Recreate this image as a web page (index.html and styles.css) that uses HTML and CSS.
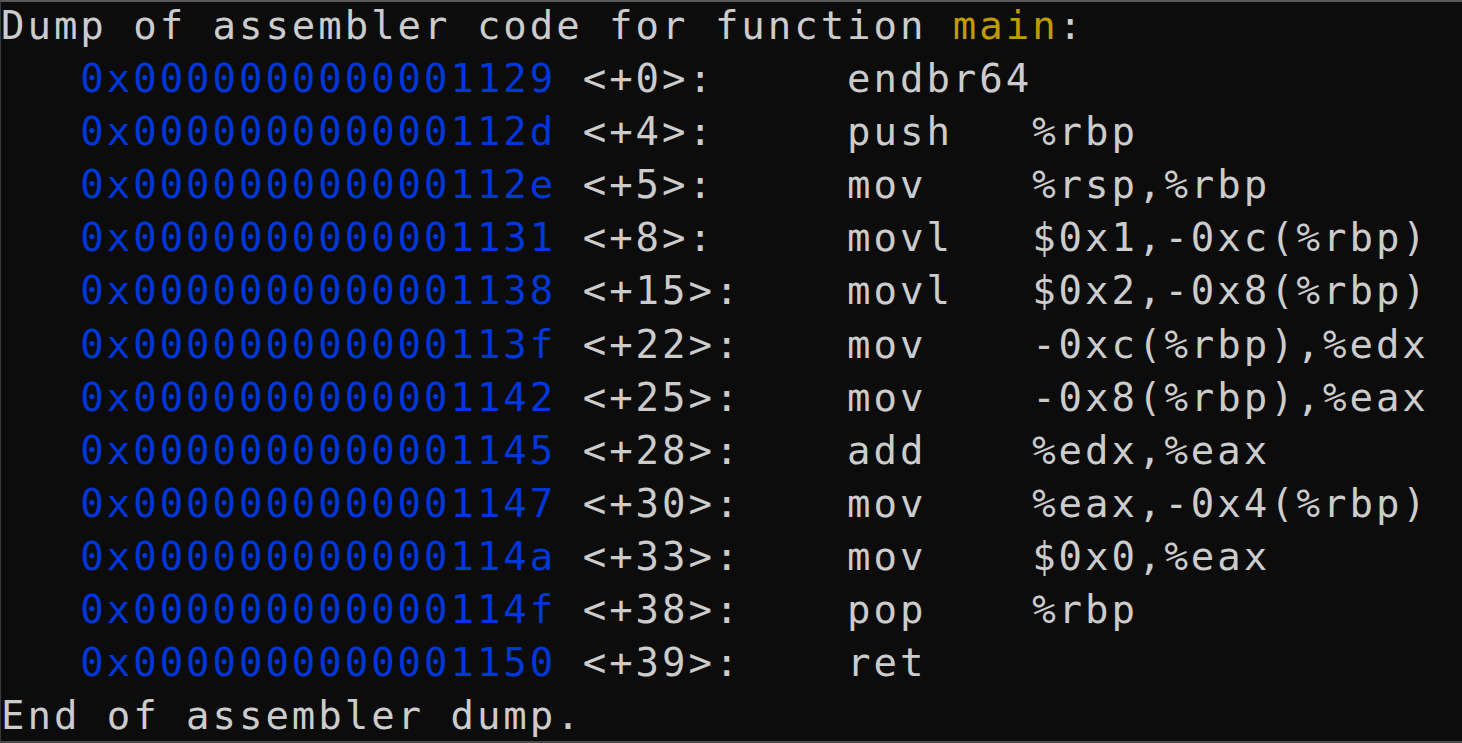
FILE: index.html
```html
<!DOCTYPE html>
<html>
<head>
<meta charset="utf-8">
<link rel="stylesheet" href="styles.css">
</head>
<body>
<div class="term">
  <div class="line">Dump of assembler code for function <span class="fn">main</span>:</div>
  <div class="line">   <span class="addr">0x0000000000001129</span> <span>&lt;+0&gt;:     endbr64</span></div>
  <div class="line">   <span class="addr">0x000000000000112d</span> <span>&lt;+4&gt;:     push   %rbp</span></div>
  <div class="line">   <span class="addr">0x000000000000112e</span> <span>&lt;+5&gt;:     mov    %rsp,%rbp</span></div>
  <div class="line">   <span class="addr">0x0000000000001131</span> <span>&lt;+8&gt;:     movl   $0x1,-0xc(%rbp)</span></div>
  <div class="line">   <span class="addr">0x0000000000001138</span> <span>&lt;+15&gt;:    movl   $0x2,-0x8(%rbp)</span></div>
  <div class="line">   <span class="addr">0x000000000000113f</span> <span>&lt;+22&gt;:    mov    -0xc(%rbp),%edx</span></div>
  <div class="line">   <span class="addr">0x0000000000001142</span> <span>&lt;+25&gt;:    mov    -0x8(%rbp),%eax</span></div>
  <div class="line">   <span class="addr">0x0000000000001145</span> <span>&lt;+28&gt;:    add    %edx,%eax</span></div>
  <div class="line">   <span class="addr">0x0000000000001147</span> <span>&lt;+30&gt;:    mov    %eax,-0x4(%rbp)</span></div>
  <div class="line">   <span class="addr">0x000000000000114a</span> <span>&lt;+33&gt;:    mov    $0x0,%eax</span></div>
  <div class="line">   <span class="addr">0x000000000000114f</span> <span>&lt;+38&gt;:    pop    %rbp</span></div>
  <div class="line">   <span class="addr">0x0000000000001150</span> <span>&lt;+39&gt;:    ret</span></div>
  <div class="line">End of assembler dump.</div>
</div>
</body>
</html>
```

FILE: styles.css
```css
html, body {
  margin: 0;
  padding: 0;
  background: #0c0c0c;
}
.term {
  width: 1462px;
  height: 743px;
  box-sizing: border-box;
  background: #0c0c0c;
  border-top: 2px solid #5a5a5a;
  border-bottom: 2px solid #4a4a4a;
  border-left: 1px solid #3a3a3a;
  overflow: hidden;
  padding-top: 0;
  margin-top: 0;
  font-family: "DejaVu Sans Mono", monospace;
  font-size: 39px;
  letter-spacing: 2.96px;
  line-height: 53.1px;
  color: #cccccc;
}
.term::before {
  content: "";
  display: block;
  margin-top: -3px;
}
.line {
  white-space: pre;
  height: 53.1px;
}
.line:first-child {
  margin-top: -3px;
}
.addr {
  color: #0037da;
}
.fn {
  color: #c19c00;
}
```
